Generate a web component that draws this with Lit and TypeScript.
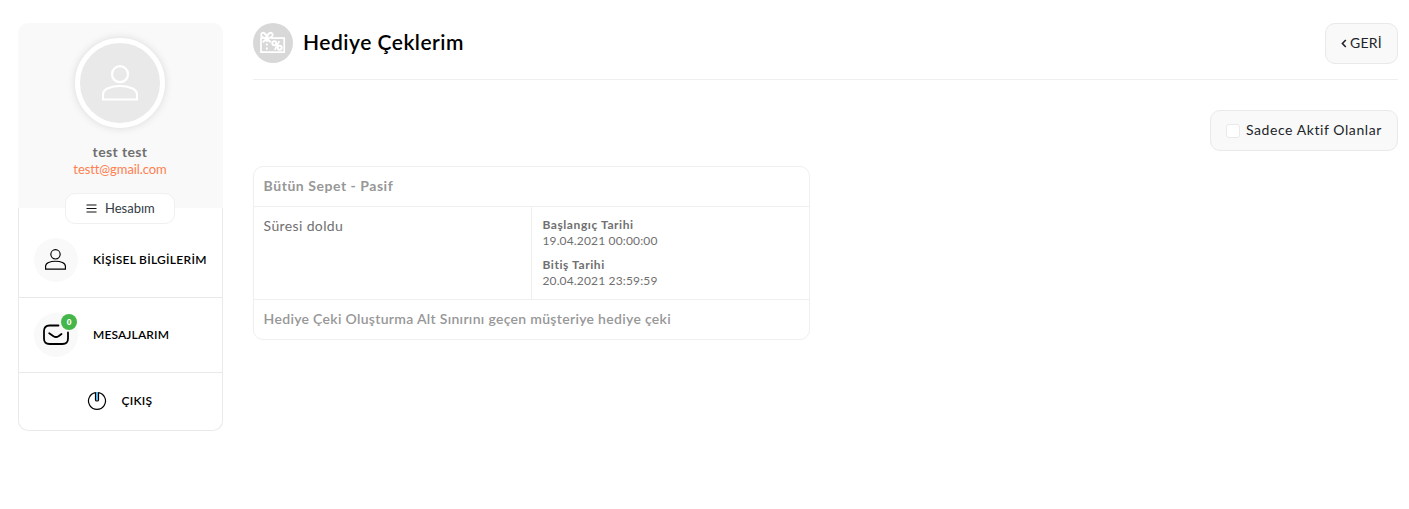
import { LitElement, html, css, svg } from "lit";
import { customElement } from "lit/decorators.js";

const person = (stroke: number) => svg`
  <circle cx="18" cy="9.2" r="8" fill="none" stroke="currentColor" stroke-width=${stroke}></circle>
  <path d="M1 34.5V29.5C1 24 9 21 18 21S35 24 35 29.5V34.5Z" fill="none" stroke="currentColor" stroke-width=${stroke}></path>`;

@customElement("account-sidebar")
export class AccountSidebar extends LitElement {
  static styles = css`
    :host { display: block; width: 205px; }
    * { box-sizing: border-box; }
    .profile { height: 185px; padding: 15px 1px 0 0; background: #f9f9f9; border-radius: 10px 10px 0 0; display: flex; flex-direction: column; align-items: center; }
    .avatar { width: 90px; height: 90px; flex: none; border: 5px solid #fff; border-radius: 50%; background: #e9e9e9; box-shadow: 0 0 8px rgba(0,0,0,.13); display: grid; place-items: center; color: #fff; }
    .avatar svg { width: 36px; height: 36px; display: block; }
    .name { margin-top: 15px; font-size: 14px; line-height: 17px; font-weight: 700; color: #707070; letter-spacing: .38px; }
    .email { font-size: 13px; line-height: 18px; color: #ff7f50; letter-spacing: -.09px; }
    .account { margin-top: 15px; flex: none; width: 110px; height: 31px; border: 1px solid #f0f0f0; border-radius: 10px; background: #fff; display: flex; align-items: center; padding: 0 0 2px 20px; gap: 8px; font-size: 13px; color: #333b45; }
    .account svg { width: 11px; height: 9px; margin-top: 1px; }
    .menu { border: 1px solid #e9e9e9; border-top: 0; border-radius: 0 0 10px 10px; height: 223px; }
    .row { display: flex; align-items: center; padding-left: 15px; gap: 15px; height: 75px; border-bottom: 1px solid #e9e9e9; font-size: 12px; font-weight: 600; color: #000; }
    .row.first { height: 90px; padding-top: 15px; }
    .row.exit { height: 57px; border: 0; padding: 0 2px 2px 0; justify-content: center; gap: 15px; }
    .label { padding-bottom: 2px; letter-spacing: .14px; }
    .exit .label { padding-bottom: 0; letter-spacing: .25px; }
    .personal { letter-spacing: .28px; }
    .disc { position: relative; width: 44px; height: 44px; border-radius: 50%; background: #f9f9f9; display: grid; place-items: center; }
    .disc svg { display: block; margin: 0 1px 1px 0; }
    .badge { position: absolute; left: 27px; top: 1px; width: 16px; height: 16px; border-radius: 50%; background: #45b649; color: #fff; font-size: 8px; font-weight: 800; line-height: 16px; text-align: center; }
  `;
  render() {
    return html`
      <div class="profile">
        <div class="avatar"><svg viewBox="0 0 36 36">${person(2.2)}</svg></div>
        <div class="name">test test</div>
        <div class="email">testt@gmail.com</div>
        <div class="account">
          <svg viewBox="0 0 11 9"><path d="M.5 1H10.5M.5 4.5H10.5M.5 8H10.5" stroke="#111" stroke-width="1.1"></path></svg>
          <span>Hesabım</span>
        </div>
      </div>
      <div class="menu">
        <div class="row first">
          <span class="disc"><svg width="21" height="21" viewBox="0 0 36 36">${person(2)}</svg></span>
          <span class="label personal">KİŞİSEL BİLGİLERİM</span>
        </div>
        <div class="row">
          <span class="disc">
            <svg width="26" height="22" viewBox="0 0 26 22" fill="none" stroke="#000" stroke-width="1.8" stroke-linecap="round" stroke-linejoin="round">
              <path d="M15.5 1.5H6.5Q1 1.5 1 7V14.5Q1 20 6.5 20H19.5Q25 20 25 14.5V8.5"></path>
              <path d="M6.2 9.2L10.5 12.2Q13 13.8 15.5 12.2L18.5 10"></path>
            </svg>
            <span class="badge">0</span>
          </span>
          <span class="label">MESAJLARIM</span>
        </div>
        <div class="row exit">
          <svg width="20" height="20" viewBox="0 0 20 20" fill="none" stroke="#000" stroke-width="1.2">
            <path d="M8.5 1.6A8.5 8.5 0 1 0 11.5 1.6"></path>
            <path d="M8.5 1.2V9Q8.5 10 10 10T11.5 9V1.2"></path><path d="M10 1V9" stroke="#55aee2" stroke-width="1.8"></path>
          </svg>
          <span class="label">ÇIKIŞ</span>
        </div>
      </div>`;
  }
}

@customElement("gift-voucher")
export class GiftVoucher extends LitElement {
  static styles = css`
    :host { display: block; width: 557px; }
    * { box-sizing: border-box; }
    .card { border: 1px solid #efefef; border-radius: 10px; height: 174px; color: #707070; }
    .title, .note { height: 39px; line-height: 38px; padding-left: 9.6px; font-size: 14px; font-weight: 700; color: #979797; }
    .title { letter-spacing: .54px; }
    .note { font-weight: 600; letter-spacing: .31px; }
    .body { display: grid; grid-template-columns: 278px 1fr; height: 94px; border: solid #efefef; border-width: 1px 0; }
    .status { padding: 10px 9.6px; font-size: 14px; line-height: 18px; border-right: 1px solid #efefef; letter-spacing: .37px; }
    .dates { padding: 10px 10px 10px 10.4px; font-size: 12px; line-height: 16px; display: flex; flex-direction: column; gap: 8px; letter-spacing: .16px; }
    .dates b { display: block; letter-spacing: .58px; }
    .dates span { display: block; }
  `;
  render() {
    return html`<div class="card">
      <div class="title">Bütün Sepet - Pasif</div>
      <div class="body">
        <div class="status">Süresi doldu</div>
        <div class="dates">
          <div><b>Başlangıç Tarihi</b><span>19.04.2021 00:00:00</span></div>
          <div><b>Bitiş Tarihi</b><span>20.04.2021 23:59:59</span></div>
        </div>
      </div>
      <div class="note">Hediye Çeki Oluşturma Alt Sınırını geçen müşteriye hediye çeki</div>
    </div>`;
  }
}

@customElement("app-root")
export class AppRoot extends LitElement {
  static styles = css`
    :host { display: flex; gap: 30px; box-sizing: border-box; width: 1409px; height: 509px; padding: 23px 11px 0 18px; background: #fff; overflow: hidden; font-family: Lato, "Noto Sans", sans-serif; }
    * { box-sizing: border-box; }
    account-sidebar { flex: none; }
    main { flex: 1; }
    header { display: flex; align-items: flex-start; height: 57px; border-bottom: 1px solid #efefef; }
    .emblem { width: 40px; height: 40px; border-radius: 50%; background: #d8d8d8; display: block; }
    h1 { flex: 1; margin: 0 0 0 10px; font-size: 21px; line-height: 37px; font-weight: 600; letter-spacing: .5px; color: #000; }
    .button { height: 41px; border: 1px solid #e9e9e9; border-radius: 10px; background: #f9f9f9; display: flex; align-items: center; color: #212529; font-size: 14px; }
    .text { padding-bottom: 2px; }
    .back { width: 73px; padding-left: 15px; gap: 3px; letter-spacing: .25px; }
    .back svg { margin-bottom: 1px; }
    .tools { display: flex; justify-content: flex-end; padding-top: 30px; margin-bottom: 15px; }
    .filter { width: 188px; padding-left: 15px; gap: 6px; letter-spacing: .57px; }
    .box { width: 14px; height: 14px; border: 1px solid #e9e9e9; border-radius: 3px; background: #fff; }
  `;
  render() {
    return html`
      <account-sidebar></account-sidebar>
      <main>
        <header>
          <svg class="emblem" viewBox="0 0 40 40" fill="none" stroke="#fff">
            <path d="M10.5 15.2H8V29.2H31.2V15.2H18" stroke-width="1.7"></path>
            <path d="M13.8 15.5C10 15 7.5 13.4 8.2 11.2C9.2 8.2 13.4 10 13.8 15.5C14.2 10 18.6 8.2 19.6 11.2C20.3 13.4 17.6 15 13.8 15.5Z" stroke-width="1.9"></path>
            <path d="M13.8 15.5L9.8 19.2M13.8 15.5L17.8 19.2M13.8 14.5V19M13.8 20.5V22.5M13.8 24.5V26.5" stroke-width="1.9"></path>
            <circle cx="21.3" cy="20.3" r="2" stroke-width="1.9"></circle><circle cx="26.7" cy="24.7" r="2" stroke-width="1.9"></circle>
            <path d="M26.3 18.2L21.8 26.8" stroke-width="1.8"></path>
          </svg>
          <h1>Hediye Çeklerim</h1>
          <div class="button back">
            <svg width="6" height="9" viewBox="0 0 6 9"><path d="M4.8 1L1.4 4.5L4.8 8" fill="none" stroke="#212529" stroke-width="1.6"></path></svg>
            <span class="text">GERİ</span>
          </div>
        </header>
        <div class="tools"><label class="button filter"><span class="box"></span><span class="text">Sadece Aktif Olanlar</span></label></div>
        <gift-voucher></gift-voucher>
      </main>`;
  }
}
